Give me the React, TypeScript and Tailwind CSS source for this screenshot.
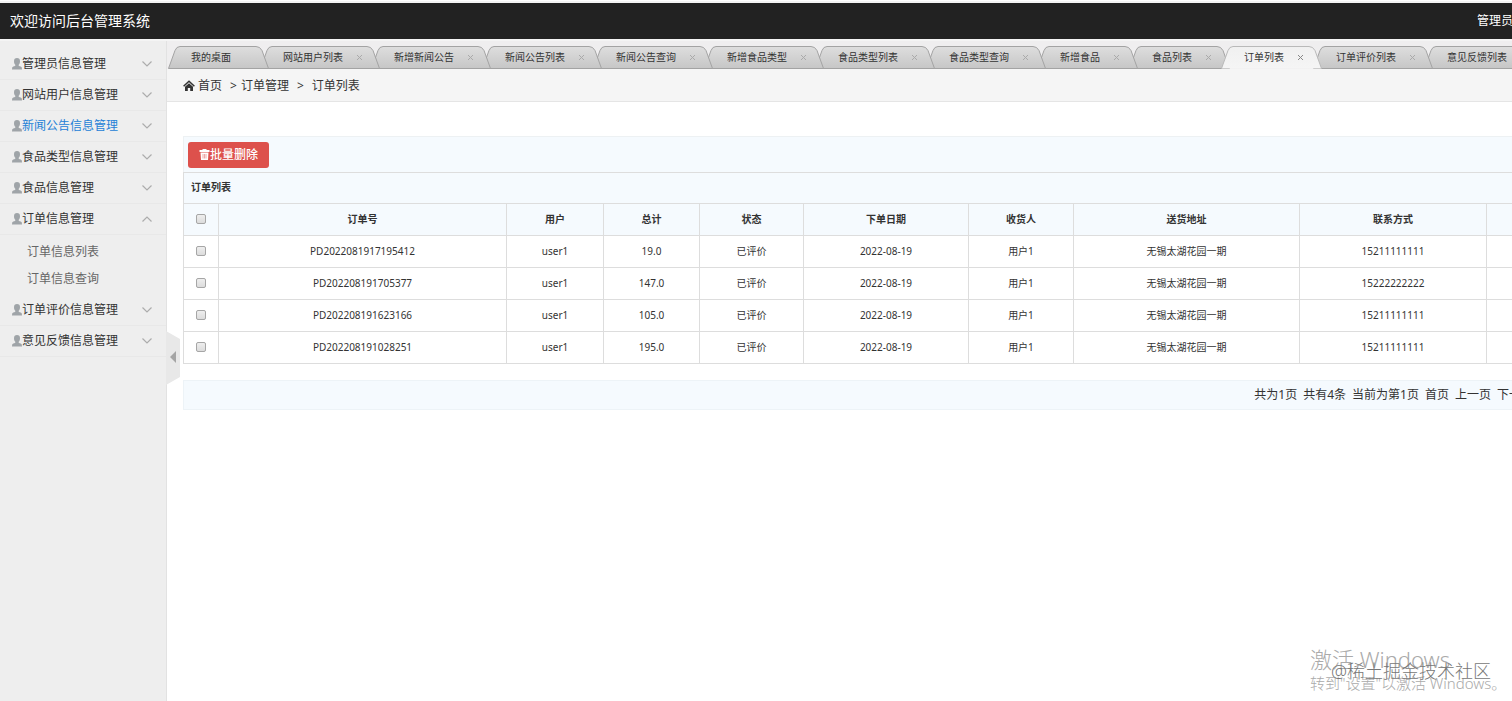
type MenuItem = {
    title: string;
    hover?: boolean;
    children?: string[];
};

type Order = {
    id: string;
    user: string;
    total: string;
    phone: string;
};

const menu: MenuItem[] = [
    { title: "管理员信息管理" },
    { title: "网站用户信息管理" },
    { title: "新闻公告信息管理", hover: true },
    { title: "食品类型信息管理" },
    { title: "食品信息管理" },
    { title: "订单信息管理", children: ["订单信息列表", "订单信息查询"] },
    { title: "订单评价信息管理" },
    { title: "意见反馈信息管理" },
];

const tabs = [
    "我的桌面",
    "网站用户列表",
    "新增新闻公告",
    "新闻公告列表",
    "新闻公告查询",
    "新增食品类型",
    "食品类型列表",
    "食品类型查询",
    "新增食品",
    "食品列表",
    "订单列表",
    "订单评价列表",
    "意见反馈列表",
];

const activeTab = "订单列表";

const columns = ["订单号", "用户", "总计", "状态", "下单日期", "收货人", "送货地址", "联系方式"];

const orders: Order[] = [
    { id: "PD2022081917195412", user: "user1", total: "19.0", phone: "15211111111" },
    { id: "PD202208191705377", user: "user1", total: "147.0", phone: "15222222222" },
    { id: "PD202208191623166", user: "user1", total: "105.0", phone: "15211111111" },
    { id: "PD202208191028251", user: "user1", total: "195.0", phone: "15211111111" },
];

function UserIcon() {
    return (
        <svg className="w-[10px] h-3 shrink-0" viewBox="0 0 10 12" fill="#9fa4a8" aria-hidden="true">
            <path d="M5 0C3 0 2 1.200 2 3.200c0 1.800.6 2.900 1.300 3.600v.9C2 8.300.4 8.500.2 9.500L0 11.500h10l-.2-2C9.600 8.500 8 8.300 6.700 7.700v-.9C7.400 6.100 8 5 8 3.200 8 1.200 7 0 5 0z" />
        </svg>
    );
}

function HomeIcon() {
    return (
        <svg className="w-3 h-[11px] mr-[3px] shrink-0" viewBox="0 0 12 11" aria-hidden="true">
            <path d="M.6 6.300 6 1.300l5.400 5" fill="none" stroke="#333" strokeWidth="1.500" />
            <path d="M2 6.800 6 3.200l4 3.600V11H7.200V8H4.800v3H2z" fill="#333" />
        </svg>
    );
}

function TrashIcon() {
    return (
        <svg className="w-[11px] h-[11px] shrink-0" viewBox="0 0 11 11" fill="#fff" aria-hidden="true">
            <path d="M3.500 0h4v1H10.500v2H.5V1h3z" />
            <path d="M1.500 3.500h8L9 11H2z" />
            <path d="M4 5v4.500M5.500 5v4.500M7 5v4.500" stroke="#dd514c" strokeWidth=".5" />
        </svg>
    );
}

function Arrow({ open }: { open?: boolean }) {
    return (
        <svg className="w-[10px] h-[6px]" viewBox="0 0 10 6" fill="none" stroke="#acacac" strokeWidth="1.200" aria-hidden="true">
            <path d={open ? "M.5 5.500 5 1l4.500 4.500" : "M.5.5 5 5 9.500.5"} />
        </svg>
    );
}

function SidebarItem({ title, hover, children }: MenuItem) {
    return (
        <li>
            <button
                className={`flex items-center w-full h-[31px] pl-3 pr-[14px] border-b border-[#e8e8e8] ${hover ? "text-[#2481d7]" : "text-[#333]"}`}
            >
                <UserIcon />
                <span className="flex-1 text-left">{title}</span>
                <Arrow open={!!children} />
            </button>
            {children && (
                <ul className="py-[3px] text-[#666]">
                    {children.map((child) => (
                        <li key={child}>
                            <a href="#" className="block pl-[27px] leading-[27px]">{child}</a>
                        </li>
                    ))}
                </ul>
            )}
        </li>
    );
}

function Sidebar() {
    return (
        <aside className="relative w-[167px] shrink-0 bg-[#eee] border-r border-[#e2e2e2] pt-2">
            <ul>
                {menu.map((item) => (
                    <SidebarItem key={item.title} {...item} />
                ))}
            </ul>
            {/* collapse handle hangs over the content area */}
            <button aria-label="收起菜单" className="absolute left-full top-[290px] z-30">
                <svg className="w-[14px] h-[54px]" viewBox="0 0 14 54">
                    <path d="M0 0 14 8v38L0 54z" fill="#e8e8e8" />
                    <path d="M10 20v12l-6-6z" fill="#a5a5a5" />
                </svg>
            </button>
        </aside>
    );
}

function Tab({ title, index }: { title: string; index: number }) {
    const active = title === activeTab;
    const short = title.length === 4;
    // the outline runs 10px under the next tab
    const w = short ? 102 : 121;
    const outline = `M1.500 22.500 8 4.500Q9.500.5 13 .5H${w - 13}Q${w - 9} .5 ${w - 7} 4.500L${w - 0.5} 22.500`;

    return (
        <li
            className={`relative shrink-0 h-[23px] ${short ? "w-[92px]" : "w-[111px]"}`}
            style={{ zIndex: active ? 20 : tabs.length - index }}
        >
            <svg className="absolute left-0 top-0 h-[23px]" width={w} viewBox={`0 0 ${w} 23`}>
                <defs>
                    <linearGradient id={`tab${index}`} x2="0" y2="1">
                        <stop stopColor={active ? "#f0f0f0" : "#dedede"} />
                        <stop offset="1" stopColor={active ? "#f5f5f5" : "#c6c6c6"} />
                    </linearGradient>
                </defs>
                <path d={active ? outline : `${outline}z`} fill={`url(#tab${index})`} stroke={active ? "#b9b9b9" : "#a3a3a3"} />
            </svg>
            <a href="#" className="relative block pl-6 text-[10px] leading-[23px] text-[#333] whitespace-nowrap">{title}</a>
            {index > 0 && (
                <button aria-label={`关闭${title}`} className={`absolute top-2 ${short ? "left-[77px]" : "left-[97px]"}`}>
                    <svg className="w-[7px] h-[7px]" viewBox="0 0 7 7" stroke={active ? "#888" : "#aaa"}>
                        <path d="M1 1l5 5M6 1l-5 5" />
                    </svg>
                </button>
            )}
        </li>
    );
}

function CheckBox({ label }: { label: string }) {
    return (
        <input
            type="checkbox"
            aria-label={label}
            className="block mx-auto mb-[2px] size-[10px] appearance-none rounded-xs border border-[#a6a6a6] bg-linear-to-b from-[#eee] to-[#dcdcdc]"
        />
    );
}

function OrderTable() {
    const cell = "border border-[#ddd] last:border-r-0 p-0";

    return (
        <table className="w-full table-fixed border-collapse text-[10px] text-center text-[#333]">
            <colgroup>
                <col className="w-[35px]" />
                <col className="w-[288px]" />
                <col className="w-[97px]" />
                <col className="w-[96px]" />
                <col className="w-[104px]" />
                <col className="w-[165px]" />
                <col className="w-[105px]" />
                <col className="w-[226px]" />
                <col className="w-[187px]" />
                <col />
            </colgroup>
            <thead className="bg-[#f5fafe]">
                <tr className="h-[31px]">
                    <th colSpan={10} className={`${cell} pl-[7px] text-left`}>订单列表</th>
                </tr>
                <tr className="h-8">
                    <th className={cell}><CheckBox label="全选" /></th>
                    {columns.map((name) => (
                        <th key={name} className={cell}>{name}</th>
                    ))}
                    <th className={cell}></th>
                </tr>
            </thead>
            <tbody>
                {orders.map((order) => (
                    <tr key={order.id} className="h-8">
                        <td className={cell}><CheckBox label={order.id} /></td>
                        <td className={cell}>{order.id}</td>
                        <td className={cell}>{order.user}</td>
                        <td className={cell}>{order.total}</td>
                        <td className={cell}>已评价</td>
                        <td className={cell}>2022-08-19</td>
                        <td className={cell}>用户1</td>
                        <td className={cell}>无锡太湖花园一期</td>
                        <td className={cell}>{order.phone}</td>
                        <td className={cell}></td>
                    </tr>
                ))}
            </tbody>
        </table>
    );
}

export default function App() {
    return (
        <div className="relative flex flex-col min-h-screen overflow-hidden bg-white text-xs text-[#333] font-['Noto_Sans','Noto_Sans_CJK_SC',sans-serif]">
            <header className="flex items-center justify-between h-10 mt-px border-y-2 border-[#f4f4f4] bg-[#222] pl-[10px] text-white whitespace-nowrap">
                <h1 className="text-sm">欢迎访问后台管理系统</h1>
                <span className="-mr-px">管理员</span>
            </header>

            <div className="flex flex-1">
                <Sidebar />
                <main className="flex-1 min-w-0">
                    <ul className="flex h-7 pt-[5px] overflow-hidden bg-[#efeeef]">
                        {tabs.map((title, i) => (
                            <Tab key={title} title={title} index={i} />
                        ))}
                    </ul>
                    <nav className="flex items-center h-[33px] pl-4 pt-px bg-[#f5f5f5] border-b border-[#e5e5e5]">
                        <HomeIcon />
                        <a href="#">首页</a>
                        <span className="ml-2 mr-1">&gt;</span>
                        <a href="#">订单管理</a>
                        <span className="mx-2">&gt;</span>
                        <span>订单列表</span>
                    </nav>

                    <div className="pl-4 pt-[34px]">
                        <div className="flex items-center h-9 pl-1 bg-[#f5fafe] border-t border-l border-[#edf1f3]">
                            <button className="flex items-center justify-center w-[81px] h-[26px] rounded-[3px] bg-[#dd514c] font-medium text-white">
                                <TrashIcon />
                                批量删除
                            </button>
                        </div>
                        <OrderTable />
                        <div className="flex items-center justify-end gap-[6px] h-[30px] mt-4 -mr-[22px] bg-[#f5fafe] border border-[#edf3f7] whitespace-nowrap">
                            <span>共为1页</span>
                            <span>共有4条</span>
                            <span>当前为第1页</span>
                            <a href="#">首页</a>
                            <a href="#">上一页</a>
                            <a href="#">下一页</a>
                        </div>
                    </div>
                </main>
            </div>

            <div className="absolute right-[6px] bottom-[6px] w-[196px] whitespace-nowrap text-[#aaa]">
                <p className="text-[22px] leading-6 font-light">激活 Windows</p>
                <p className="text-[15px] leading-6 font-light">转到"设置"以激活 Windows。</p>
                <p className="absolute left-[21px] top-3 text-lg leading-6 font-light text-[#777]">@稀土掘金技术社区</p>
            </div>
        </div>
    );
}
